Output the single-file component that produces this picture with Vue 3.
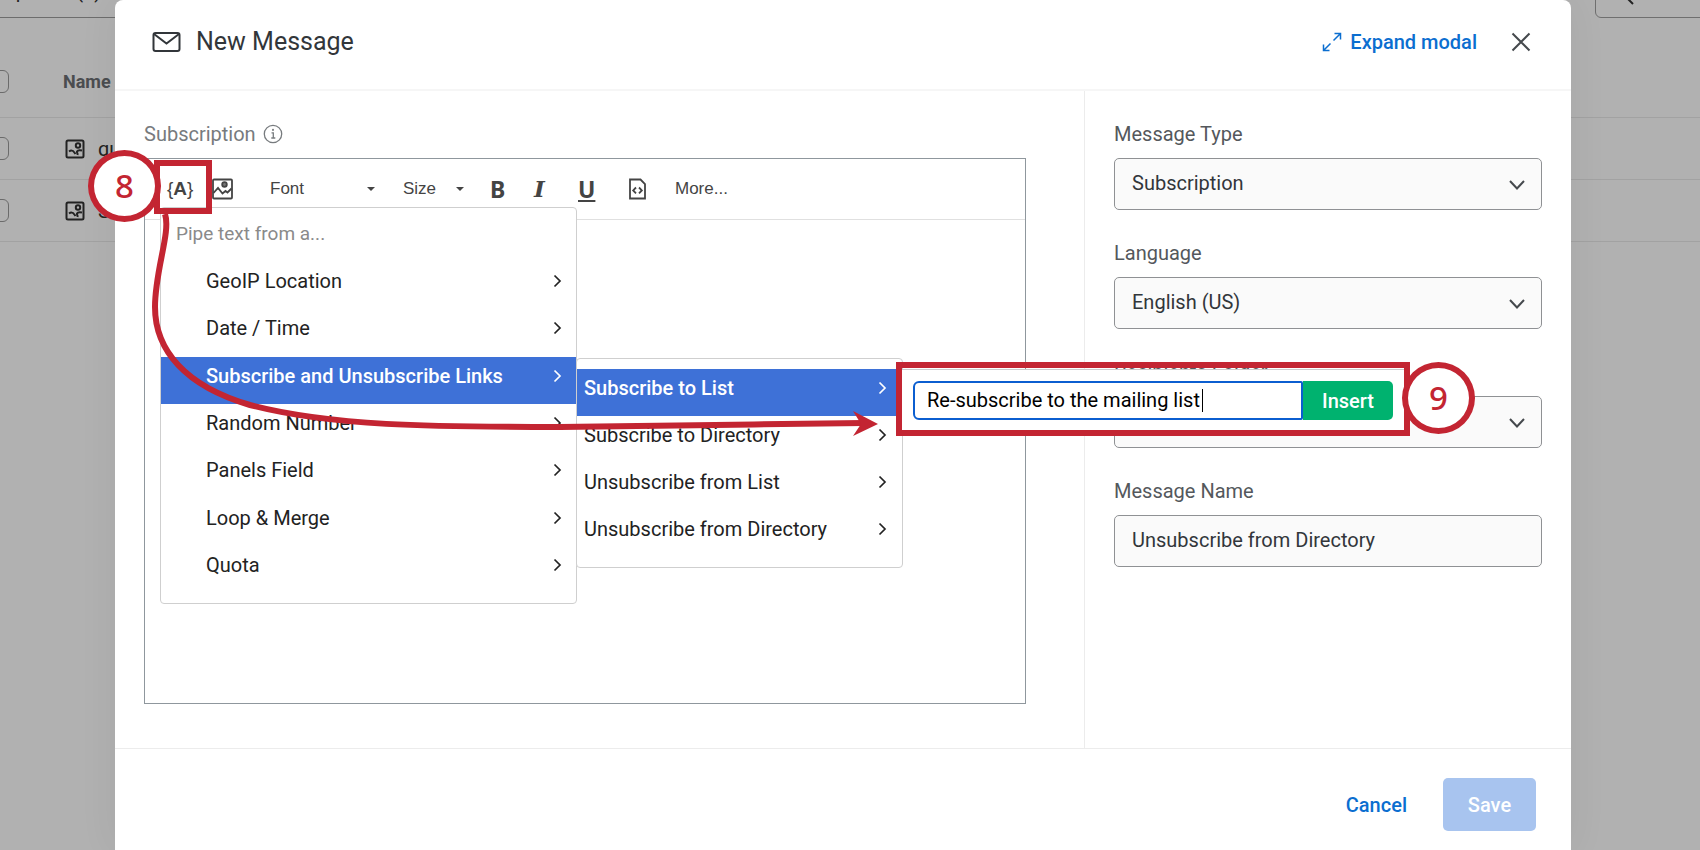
<script setup>
const pageRows = [{ name: 'quick list' }, { name: 'Summer list' }]
const menu = ['GeoIP Location', 'Date / Time', 'Subscribe and Unsubscribe Links', 'Random Number', 'Panels Field', 'Loop & Merge', 'Quota']
const submenu = ['Subscribe to List', 'Subscribe to Directory', 'Unsubscribe from List', 'Unsubscribe from Directory']
const selects = [
  { id: 'type', label: 'Message Type', value: 'Subscription' },
  { id: 'language', label: 'Language', value: 'English (US)' },
  { id: 'folder', label: 'Recipients Folder', value: '' },
]
</script>

<template>
  <div class="screen">
    <div class="page" aria-hidden="true">
      <div class="page-bar">
        <span class="page-title">Options (0)</span>
        <span class="page-search">
          <svg width="20" height="20" viewBox="0 0 20 20"><circle cx="8" cy="8" r="6" /><path d="M12 12l7 7" /></svg>
        </span>
      </div>
      <div class="page-row page-head"><i class="tick"></i><b>Name</b></div>
      <div v-for="row in pageRows" :key="row.name" class="page-row">
        <i class="tick"></i>
        <svg class="thumb" width="20" height="20" viewBox="0 0 20 20">
          <rect x="1.500" y="1.500" width="17" height="17" rx="1.500" />
          <circle cx="13" cy="6.500" r="2.200" />
          <path d="M4 12.500c2-1.500 4-1 5 .5l1.500 2M17 11.500c-2.500-.5-4.500 0-5 1s1 1.500.5 3.500" />
        </svg>
        <span>{{ row.name }}</span>
      </div>
    </div>

    <main class="modal">
      <header class="modal-head">
        <svg class="mail" width="30" height="22" viewBox="0 0 30 22"><rect x="1.500" y="2" width="26" height="18" rx="2" /><path d="M2 3L14.500 12.500L27 3" /></svg>
        <h1>New Message</h1>
        <button class="link expand" type="button">
          <svg width="20" height="20" viewBox="0 0 20 20"><path d="M12.500 1.500h6v6M18.500 1.500l-7 7M7.500 18.500h-6v-6M1.500 18.500l7-7" /></svg>
          Expand modal
        </button>
        <button class="close" type="button" aria-label="Close">
          <svg width="20" height="20" viewBox="0 0 20 20"><path d="M1.500 1.500l17 17M18.500 1.500l-17 17" /></svg>
        </button>
      </header>

      <div class="modal-body">
        <section class="compose">
          <h2 class="label muted">
            Subscription
            <svg width="20" height="20" viewBox="0 0 20 20"><circle cx="10" cy="10" r="8.700" /><path d="M8.500 8.800h1.800v5M8.300 14h4" /><circle cx="10" cy="5.900" r=".4" /></svg>
          </h2>
          <div class="editor">
            <div class="toolbar">
              <button class="tool pipe" type="button" aria-label="Piped text">{<b>A</b>}</button>
              <button class="tool picture" type="button" aria-label="Insert picture">
                <svg width="22" height="22" viewBox="0 0 22 22"><rect x="1" y="1.500" width="19" height="19" rx="1" /><circle class="sun" cx="12.500" cy="6.500" r="2.300" /><path d="M1.500 15l4.500-5 4.500 5.500 3-2.500 2 1.500 4-4" /></svg>
              </button>
              <button class="tool font" type="button">Font<i class="caret"></i></button>
              <button class="tool size" type="button">Size<i class="caret"></i></button>
              <button class="tool bold" type="button">B</button>
              <button class="tool italic" type="button">I</button>
              <button class="tool under" type="button">U</button>
              <button class="tool source" type="button" aria-label="Source">
                <svg width="18" height="22" viewBox="0 0 18 22"><path d="M1 1.500h10.500l4.500 4.500v14.500h-15z" /><path d="M7 9.500l-2.800 2.900 2.800 2.900M10 9.500l2.800 2.900-2.800 2.900" /></svg>
              </button>
              <button class="tool more" type="button">More...</button>
            </div>

            <div class="menu">
              <p>Pipe text from a...</p>
              <ul>
                <li v-for="item in menu" :key="item">
                  <button type="button" :class="{ active: item.startsWith('Subscribe') }">
                    {{ item }}
                    <svg width="10" height="14" viewBox="0 0 10 14"><path d="M1.500 1.500L7 7L1.500 12.500" /></svg>
                  </button>
                </li>
              </ul>
            </div>
            <div class="menu submenu">
              <ul>
                <li v-for="item in submenu" :key="item">
                  <button type="button" :class="{ active: item === 'Subscribe to List' }">
                    {{ item }}
                    <svg width="10" height="14" viewBox="0 0 10 14"><path d="M1.500 1.500L7 7L1.500 12.500" /></svg>
                  </button>
                </li>
              </ul>
            </div>
            <form class="insert" @submit.prevent>
              <span class="entry"><input aria-label="Link text" value="Re-subscribe to the mailing list" /><i class="cursor"></i></span>
              <button type="submit">Insert</button>
            </form>
          </div>
        </section>

        <aside class="options">
          <div v-for="s in selects" :key="s.id" class="field">
            <label class="label" :for="s.id">{{ s.label }}</label>
            <div class="select">
              <select :id="s.id"><option>{{ s.value }}</option></select>
              <svg width="18" height="12" viewBox="0 0 18 12"><path d="M2 2l7 7.500L16 2" /></svg>
            </div>
          </div>
          <div class="field">
            <label class="label" for="name">Message Name</label>
            <input id="name" value="Unsubscribe from Directory" />
          </div>
        </aside>
      </div>

      <footer class="modal-foot">
        <button class="link" type="button">Cancel</button>
        <button class="save" type="button">Save</button>
      </footer>
    </main>

    <svg class="arrow" width="740" height="240" viewBox="150 205 740 240" aria-hidden="true">
      <path class="line" d="M165 214C171 232 155 270 155 307C155 350 185 386 250 405C330 426 430 427 560 427C680 426 760 424 864 423" />
      <path class="head" d="M878 424L853 411L861 424L853 436Z" />
    </svg>
    <div class="frame frame-8"></div>
    <div class="frame frame-9"></div>
    <div class="step step-8">8</div>
    <div class="step step-9">9</div>
  </div>
</template>

<style>
body { margin: 0; overflow: hidden; }
</style>

<style scoped>
* { box-sizing: border-box; }
.screen { position: relative; min-height: 100vh; overflow: hidden; display: flex; background: #b1b1b1; font: 20px/24px Roboto, "Liberation Sans", sans-serif; color: #32363a; }
svg { fill: none; stroke: currentColor; stroke-width: 2; flex: none; }
button, input, select { font: inherit; color: inherit; margin: 0; padding: 0; border: 0; background: none; text-align: left; }
h1, h2, p, ul { margin: 0; padding: 0; font-weight: 400; list-style: none; }

.page { position: absolute; inset: 0; color: #222; }
.page-bar { position: relative; height: 46px; }
.page-title { position: absolute; left: 0; top: -21px; width: 116px; height: 39px; padding-left: 2px; border-bottom: 1px solid #6d6d6d; white-space: nowrap; }
.page-search { position: absolute; top: -32px; left: calc(100% - 105px); width: 200px; height: 50px; border: 1px solid #6f6f6f; border-radius: 6px; padding: 16px 18px; }
.page-row { height: 62px; display: flex; align-items: center; border-bottom: 1px solid #a2a2a2; }
.page-head { height: 72px; color: #4b4d50; font-size: 18px; }
.page-head b { margin-left: 54px; }
.tick { width: 24px; height: 23px; margin-left: -15px; border: 1px solid #6b6b6b; border-radius: 6px; }
.thumb { margin: 0 13px 0 56px; }

.modal { position: relative; flex: 1; margin: 0 129px 0 115px; background: #fff; border-radius: 8px 8px 0 0; display: flex; flex-direction: column; box-shadow: 0 0 40px rgba(0, 0, 0, .06); }
.modal-head { height: 91px; padding: 0 40px 5px 37px; display: flex; align-items: center; border-bottom: 2px solid #f6f6f6; }
h1 { margin: 0 auto 0 14px; font-size: 25px; line-height: 32px; }
.link { color: #0b6ed0; font-weight: 500; }
.expand { display: flex; align-items: center; gap: 8px; }
.expand svg { stroke-width: 1.500; }
.close { display: flex; margin-left: 34px; color: #45494d; }
.modal-body { flex: 1; display: flex; }
.compose { flex: 1; padding: 30px 58px 44px 29px; display: flex; flex-direction: column; }
.label { display: flex; align-items: center; gap: 7px; height: 26px; margin-bottom: 11px; font-size: 20px; color: #54585c; }
.muted { color: #777b7e; }
.label svg { stroke-width: 1.300; }
.editor { position: relative; flex: 1; border: 1px solid #8f979d; }
.toolbar { height: 61px; padding-left: 22px; display: flex; align-items: center; border-bottom: 1px solid #e0e0e0; font: 17px/24px "Liberation Sans", sans-serif; color: #444; }
.tool { display: flex; align-items: center; height: 30px; }
.pipe { width: 45px; font-weight: 400; font-size: 19px; }
.picture { width: 58px; }
.picture svg { stroke-width: 1.800; }
.sun { fill: #777; }
.caret { border: 4px solid transparent; border-top: 4px solid #444; border-bottom: 0; }
.font, .size { width: 133px; padding-right: 28px; justify-content: space-between; }
.size { width: 87px; padding-right: 26px; }
.bold, .italic, .under { width: 44px; font: 700 23px/24px "Noto Sans", sans-serif; }
.italic { font-family: "DejaVu Serif", serif; font-style: italic; }
.under { width: 51px; text-decoration: underline; }
.source { width: 46px; }
.source svg { stroke-width: 1.800; }

.menu { position: absolute; z-index: 1; top: 48px; left: 15px; width: 417px; height: 397px; padding-top: 14px; background: #fff; border: 1px solid #cfcfcf; border-radius: 4px; color: #222; }
.menu p { padding-left: 15px; color: #8a8a8a; height: 40px; font-size: 19px; }
.menu ul { height: 332px; display: flex; flex-direction: column; }
.menu li { flex: 1; display: flex; }
.menu button { flex: 1; display: flex; align-items: center; justify-content: space-between; padding: 0 13px 10px 45px; }
.menu svg { stroke-width: 1.700; }
.menu .active { background: #3e71d7; color: #fff; font-weight: 500; }
.submenu { top: 199px; left: 431px; width: 327px; height: 210px; padding-top: 10px; }
.submenu ul { height: 189px; }
.submenu button { padding-left: 7px; padding-right: 14px; }
.insert { position: absolute; z-index: 2; top: 210px; left: 754px; width: 508px; height: 62px; padding: 11px 14px; display: flex; background: #fff; border-top: 1px solid #ccc; color: #000; }
.entry { flex: 1; display: flex; align-items: center; position: relative; border: 2px solid #0b5ed0; border-radius: 6px 2px 2px 6px; }
.entry input { width: 100%; height: 36px; padding: 0 0 2px 12px; }
.cursor { position: absolute; left: 287px; width: 1px; height: 23px; background: #000; }
.insert button { width: 90px; background: #00b26f; color: #fff; font-weight: 500; text-align: center; border-radius: 0 5px 5px 0; }

.options { width: 487px; padding: 30px 29px 0 29px; border-left: 1px solid #ececec; }
.field { margin-bottom: 30px; }
.select { position: relative; display: flex; }
.select svg { position: absolute; right: 16px; top: 21px; color: #45494d; }
.field select, .field input { width: 100%; height: 52px; padding: 0 17px 3px; appearance: none; background: #fafafa; border: 1px solid #8f9194; border-radius: 5px; }
.modal-foot { height: 102px; padding: 10px 35px 0 0; display: flex; align-items: center; justify-content: flex-end; gap: 36px; border-top: 1px solid #ececec; }
.save { width: 93px; height: 53px; background: #a8c4ef; color: #fff; font-weight: 500; text-align: center; border-radius: 5px; }

.arrow { position: absolute; z-index: 3; left: 150px; top: 205px; }
.line { stroke: #c32532; stroke-width: 6; }
.head { fill: #c32532; stroke: none; }
.frame { position: absolute; z-index: 3; border: 6px solid #c32532; }
.frame-8 { left: 154px; top: 160px; width: 58px; height: 54px; }
.frame-9 { left: 896px; top: 362px; width: 514px; height: 74px; }
.step { position: absolute; z-index: 4; width: 73px; height: 72px; border: 6px solid #c32532; border-radius: 50%; background: #fff; color: #c32532; display: grid; place-items: center; font: 500 33px/36px "Noto Sans", sans-serif; }
.step-8 { left: 88px; top: 150px; }
.step-9 { left: 1402px; top: 362px; }
</style>
